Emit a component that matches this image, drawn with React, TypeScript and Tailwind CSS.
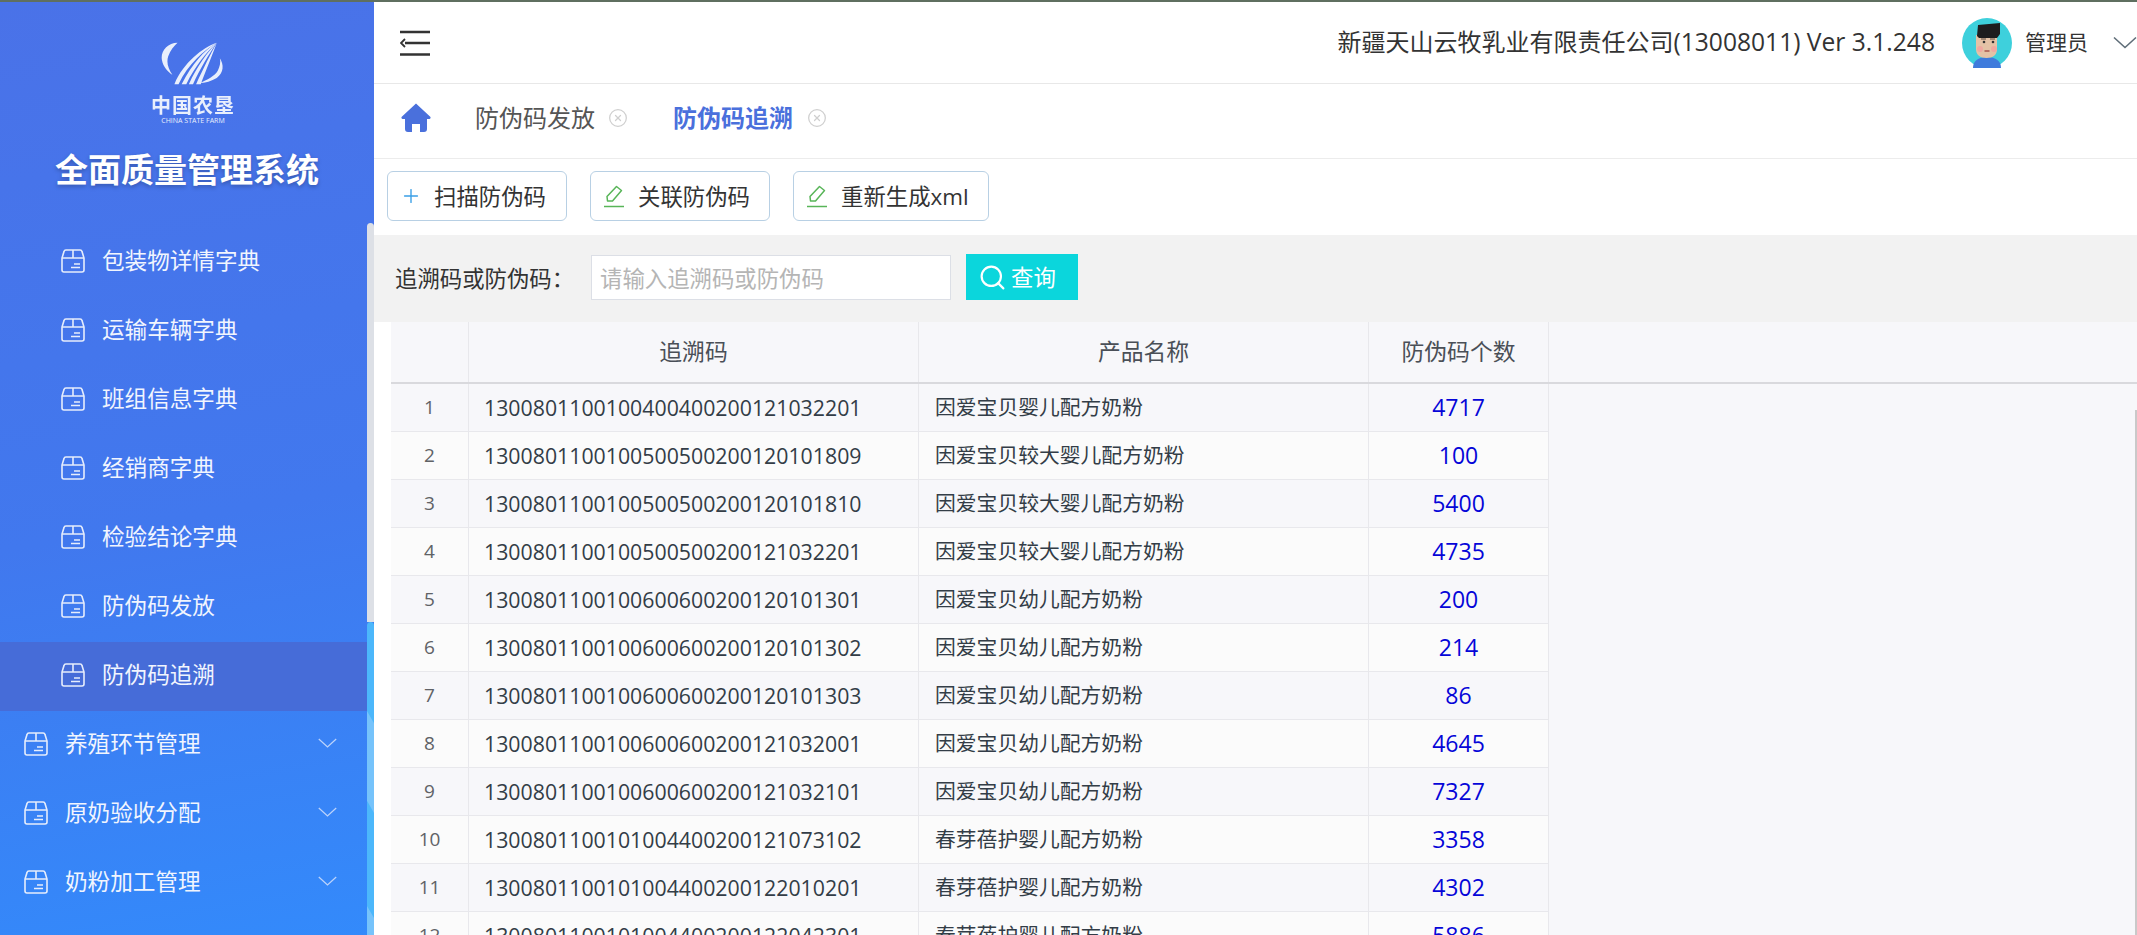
import { CircleX, Plus, Search } from 'lucide-react';

const SUB_MENU = ['包装物详情字典', '运输车辆字典', '班组信息字典', '经销商字典', '检验结论字典', '防伪码发放', '防伪码追溯'];
const GROUP_MENU = ['养殖环节管理', '原奶验收分配', '奶粉加工管理'];

const ROWS = [
  ['1300801100100400400200121032201', '因爱宝贝婴儿配方奶粉', '4717'],
  ['1300801100100500500200120101809', '因爱宝贝较大婴儿配方奶粉', '100'],
  ['1300801100100500500200120101810', '因爱宝贝较大婴儿配方奶粉', '5400'],
  ['1300801100100500500200121032201', '因爱宝贝较大婴儿配方奶粉', '4735'],
  ['1300801100100600600200120101301', '因爱宝贝幼儿配方奶粉', '200'],
  ['1300801100100600600200120101302', '因爱宝贝幼儿配方奶粉', '214'],
  ['1300801100100600600200120101303', '因爱宝贝幼儿配方奶粉', '86'],
  ['1300801100100600600200121032001', '因爱宝贝幼儿配方奶粉', '4645'],
  ['1300801100100600600200121032101', '因爱宝贝幼儿配方奶粉', '7327'],
  ['1300801100101004400200121073102', '春芽蓓护婴儿配方奶粉', '3358'],
  ['1300801100101004400200122010201', '春芽蓓护婴儿配方奶粉', '4302'],
  ['1300801100101004400200122042301', '春芽蓓护婴儿配方奶粉', '5886'],
];

function BoxIcon() {
  return (
    <svg className="h-[24px] w-[24px] shrink-0 text-[#e6edfc]" viewBox="0 0 24 24" fill="none" stroke="currentColor" strokeWidth={1.6}>
      <path d="M5 1h14a2 2 0 0 1 2 1.600L23 9v12a2 2 0 0 1-2 2H3a2 2 0 0 1-2-2V9l2-6.400A2 2 0 0 1 5 1z" />
      <path d="M1 9h22M12 1v8M13 15h6M10 18.500h9" />
    </svg>
  );
}

function Chevron({ className }: { className: string }) {
  return (
    <svg className={className} viewBox="0 0 24 12" fill="none" stroke="currentColor" strokeWidth={1.6}>
      <path d="M1 1l11 10L23 1" />
    </svg>
  );
}

function EditIcon() {
  return (
    <svg className="h-[24px] w-[20px] shrink-0 text-[#58b558]" viewBox="0 0 20 24" fill="none" stroke="currentColor" strokeWidth={1.5}>
      <path d="M12.500 2.500l5 4-9 10.500H3.500l-.5-4.500z" strokeLinejoin="round" />
      <path d="M0 22.500h20" />
    </svg>
  );
}

function Logo() {
  return (
    <div className="ml-3 flex flex-col items-center text-[#e9effc]">
      <svg className="h-[47px] w-[64px]" viewBox="0 0 62 42" fill="currentColor">
        <path d="M16 1C6 1-1 10 1 18c1 6 6 11 10 14-4-6-6-12-4-18 2-6 6-10 9-13z" />
        <path d="M57 16c4 6 4 14-3 19-5 3-11 5-17 5 8-3 15-7 18-12 2-4 3-8 2-12z" />
        <path d="M54 1C40 6 22 20 13 41h4C26 22 42 8 54 1z" />
        <path d="M54 1C42 8 30 22 20 41h4.500C33 24 44 10 54 1z" />
        <path d="M54 1C45 10 35 24 27 41h4C38 26 47 11 54 1z" />
        <path d="M54 1C48 12 41 26 34 41h4.500C44 27 50 12 54 1z" />
      </svg>
      <span className="mt-[9px] text-[20px] leading-[20px] font-bold tracking-[1px] blur-[0.4px]">中国农垦</span>
      <span className="mt-[1px] text-[7px] leading-[8px] whitespace-nowrap">CHINA STATE FARM</span>
    </div>
  );
}

function Avatar() {
  return (
    <svg className="h-[50px] w-[50px] shrink-0" viewBox="0 0 50 50">
      <circle cx="25" cy="25" r="25" fill="#3ed0dc" />
      <path d="M11 50c0-7 5-11 14-11s14 4 14 11z" fill="#3f7bdc" />
      <path d="M14 17h21v14c0 6-4 9-10.500 9S14 37 14 31z" fill="#e4c2a6" />
      <path d="M16 7l22-2v11l-3 4H17l-2-2z" fill="#1d1d1f" />
      <path d="M19 21h5M28 21h5" stroke="#5a4a40" strokeWidth={1.200} />
      <circle cx="22" cy="24" r="1.300" fill="#333" />
      <circle cx="31" cy="24" r="1.300" fill="#333" />
      <circle cx="18" cy="31" r="3" fill="#f0a8a0" />
      <circle cx="32" cy="31" r="3" fill="#f0a8a0" />
      <path d="M22.500 33h5" stroke="#a8554d" strokeWidth={1.500} />
    </svg>
  );
}

function Sidebar() {
  return (
    <aside className="relative h-full w-[374px] shrink-0 overflow-hidden bg-[linear-gradient(170deg,#4a72e8_0%,#4178ee_55%,#338afb_100%)] text-[22.6px] text-[#f1f5fe]">
      <div className="flex h-[226px] flex-col items-center pt-[38px]">
        <Logo />
        <h1 className="mt-[23px] text-[33px] leading-[44px] font-bold text-white [text-shadow:0_2px_4px_rgba(0,0,0,0.25)]">全面质量管理系统</h1>
      </div>

      {SUB_MENU.map((label, i) => (
        <div key={label} className={`flex h-[69px] items-center gap-[17px] pb-[3px] pl-[61px] ${i === SUB_MENU.length - 1 ? 'bg-[#466cd8]' : ''}`}>
          <BoxIcon />
          <span>{label}</span>
        </div>
      ))}

      {GROUP_MENU.map((label) => (
        <div key={label} className="flex h-[69px] items-center pr-[37px] pb-[3px] pl-[24px]">
          <BoxIcon />
          <span className="ml-[17px] flex-1">{label}</span>
          <Chevron className="h-[10px] w-[19px] -translate-y-[1px] text-[#bcd3fb]" />
        </div>
      ))}

      {/* menu scrollbar */}
      <div className="absolute top-[221px] right-0 bottom-0 flex w-[7px] flex-col">
        <div className="h-[399px] shrink-0 rounded-t-[4px] bg-[#dde0e6]" />
        <div className="flex-1 rounded-t-[4px] bg-[#4cb7fb]">
          <div className="mt-[89px] h-[102px] bg-[#76c3fb] [clip-path:polygon(0_0,100%_12%,100%_100%,0_88%)]" />
          <div className="mt-[93px] h-[40px] bg-[#76c3fb] [clip-path:polygon(0_0,100%_30%,100%_100%,0_100%)]" />
        </div>
      </div>
    </aside>
  );
}

function Header() {
  return (
    <div className="flex h-[82px] shrink-0 items-center justify-between border-b border-[#e8e8e8] pl-[26px] text-[#333]">
      <svg className="h-[26px] w-[30px]" viewBox="0 0 30 26" fill="none" stroke="#333" strokeWidth={2.400}>
        <path d="M0 2h30M5 13h25M0 24.500h30" />
        <path d="M5 9l-4 4 4 4" strokeWidth={1.800} />
      </svg>
      <div className="flex items-center">
        <span className="text-[24px] whitespace-nowrap">
          新疆天山云牧乳业有限责任公司<span className="text-[24.600px]">(13008011) Ver 3.1.248</span>
        </span>
        <div className="ml-[27px]">
          <Avatar />
        </div>
        <span className="ml-[13px] text-[21px]">管理员</span>
        <Chevron className="ml-[25px] h-[15px] w-[24px] text-[#5f6d78]" />
      </div>
    </div>
  );
}

function Tabs() {
  return (
    <div className="flex h-[75px] shrink-0 items-center border-b border-[#ececec] pb-[7px] pl-[27px] text-[24px] text-[#555]">
      <svg className="h-[29px] w-[30px]" viewBox="0 0 30 29" fill="#4a70dc">
        <path d="M15 .5l14.500 13.500q.5 2-2 2H26v10q0 3-3 3h-4v-8h-8v8H7q-3 0-3-3V16H2.500q-2.500 0-2-2z" />
      </svg>
      <span className="ml-[44px]">防伪码发放</span>
      <CircleX className="ml-[13px] text-[#cfcfcf]" size={20} strokeWidth={1.5} />
      <span className="ml-[45px] font-bold text-[#4a70dc]">防伪码追溯</span>
      <CircleX className="ml-[14px] text-[#cfcfcf]" size={20} strokeWidth={1.5} />
    </div>
  );
}

function Toolbar() {
  return (
    <div className="flex h-[76px] shrink-0 items-center gap-[23px] pb-[2px] pl-[13px] text-[22.4px] text-[#333]">
      <button className="flex h-[50px] w-[180px] items-center gap-[13px] rounded-[6px] border border-[#b8d0e4] pl-[13px]">
        <Plus className="-mx-[1px] text-[#3a9fe6]" size={22} strokeWidth={1.5} />
        <span className="pt-[2px]">扫描防伪码</span>
      </button>
      <button className="flex h-[50px] w-[180px] items-center gap-[14px] rounded-[6px] border border-[#b8d0e4] pl-[13px]">
        <EditIcon />
        <span className="pt-[2px]">关联防伪码</span>
      </button>
      <button className="flex h-[50px] w-[196px] items-center gap-[14px] rounded-[6px] border border-[#b8d0e4] pl-[13px]">
        <EditIcon />
        <span className="pt-[2px]">重新生成xml</span>
      </button>
    </div>
  );
}

function SearchBar() {
  return (
    <div className="flex h-[87px] shrink-0 items-center bg-[#f2f2f2] pb-[3px] pl-[21px] text-[22.4px] text-[#333]">
      <span className="w-[176px] pt-[3px] whitespace-nowrap">追溯码或防伪码：</span>
      <div className="ml-[20px] flex h-[45px] w-[360px] items-center border border-[#dcdfe6] bg-white pt-[3px] pl-[8px] text-[#b5b5b5]">请输入追溯码或防伪码</div>
      <button className="ml-[15px] flex h-[46px] w-[112px] items-center gap-[4px] bg-[#0bd6dc] pl-[12px] text-white">
        <Search size={29} strokeWidth={1.8} />
        <span className="pt-[2px]">查询</span>
      </button>
    </div>
  );
}

function DataTable() {
  const cell = 'flex items-center border-r border-[#e8e8ec]';
  return (
    <div className="relative flex-1 overflow-hidden pl-[17px]">
      <div className="h-full bg-[#f7f7fa]">
        <div className="grid h-[62px] grid-cols-[78px_450px_450px_180px_1fr] border-b-2 border-[#d9d9dd] text-[22.8px] text-[#4a4f57]">
          <div className={cell} />
          <div className={`${cell} justify-center`}>追溯码</div>
          <div className={`${cell} justify-center`}>产品名称</div>
          <div className={`${cell} justify-center`}>防伪码个数</div>
        </div>
        {ROWS.map(([code, name, count], i) => (
          <div key={code} className="grid h-[48px] grid-cols-[78px_450px_450px_180px_1fr]">
            <div className={`${cell} justify-center border-b text-[19px] text-[#606266] ${i % 2 === 0 ? 'bg-[#f7f7fa]' : 'bg-[#fbfbfb]'}`}>{i + 1}</div>
            <div className={`${cell} border-b pl-[15px] text-[21.3px] text-[#333d47] ${i % 2 === 0 ? 'bg-[#f7f7fa]' : 'bg-[#fbfbfb]'}`}>{code}</div>
            <div className={`${cell} border-b pl-[16px] text-[20.8px] text-[#333d47] ${i % 2 === 0 ? 'bg-[#f7f7fa]' : 'bg-[#fbfbfb]'}`}>{name}</div>
            <div className={`${cell} justify-center border-b text-[23px] text-[#0505d8] ${i % 2 === 0 ? 'bg-[#f7f7fa]' : 'bg-[#fbfbfb]'}`}>{count}</div>
          </div>
        ))}
      </div>
      <div className="absolute top-[88px] right-0 bottom-0 w-[2px] bg-[#c9c9c9]" />
    </div>
  );
}

export default function App() {
  return (
    <div className="flex h-[935px] w-full flex-col overflow-hidden bg-white font-['Open_Sans','Noto_Sans_CJK_SC',sans-serif]">
      <div className="h-[2px] shrink-0 bg-[#5f6f60]" />
      <div className="flex min-h-0 flex-1">
        <Sidebar />
        <main className="flex min-w-0 flex-1 flex-col">
          <Header />
          <Tabs />
          <Toolbar />
          <SearchBar />
          <DataTable />
        </main>
      </div>
    </div>
  );
}
